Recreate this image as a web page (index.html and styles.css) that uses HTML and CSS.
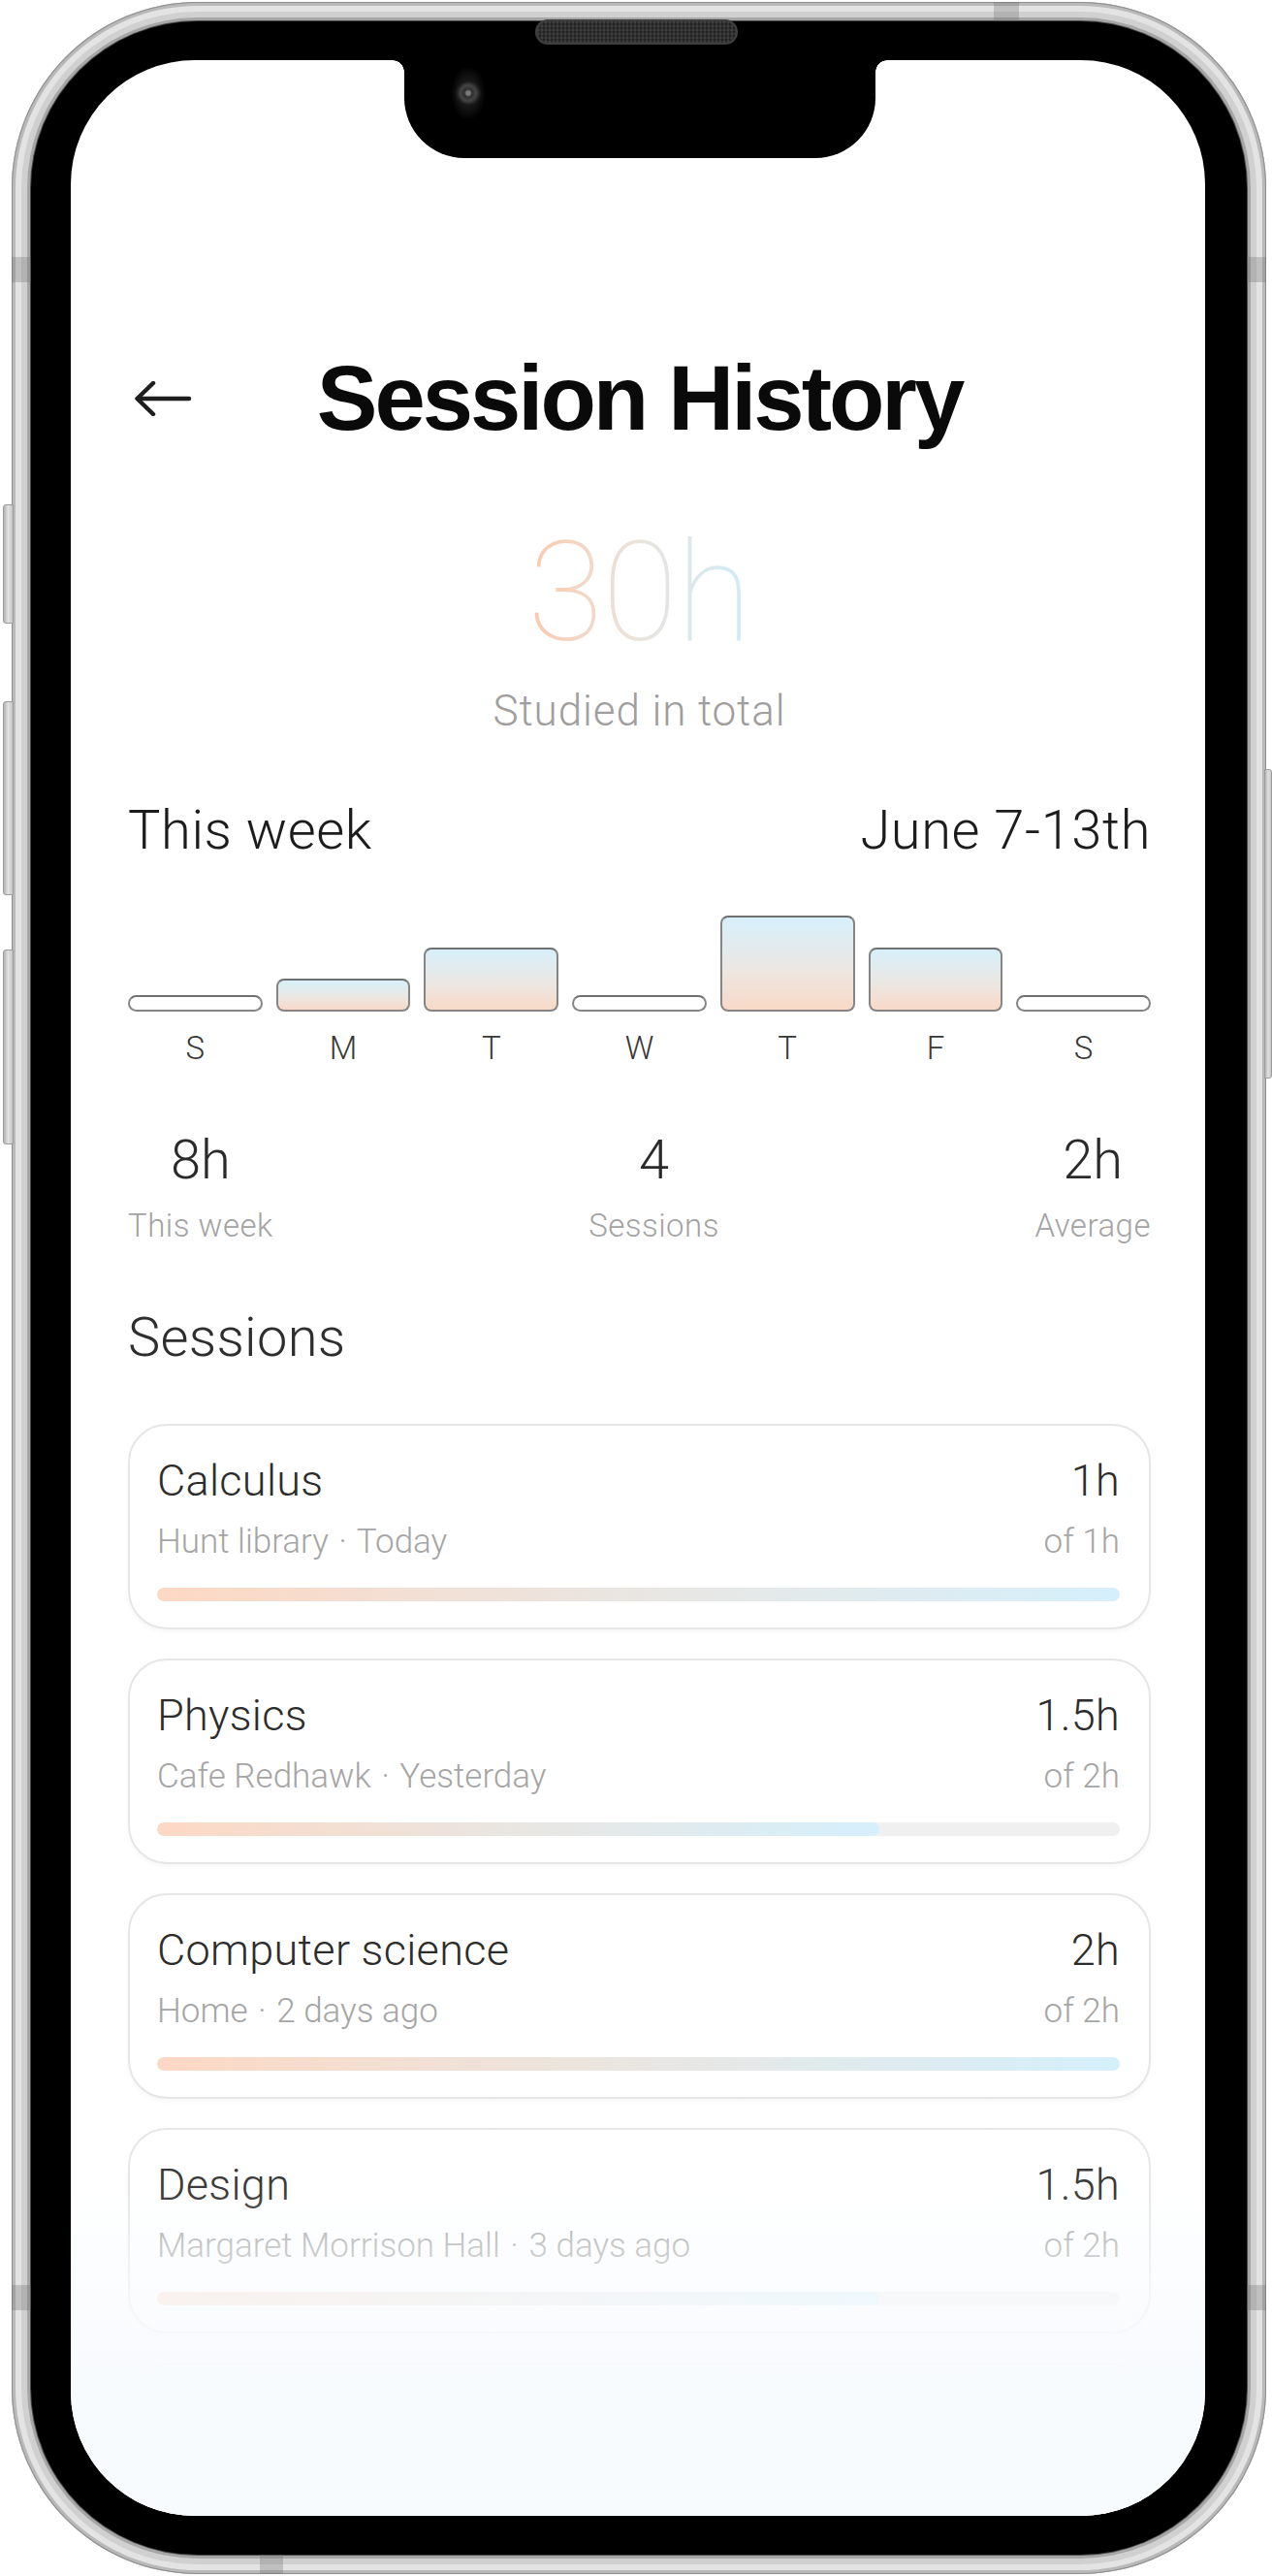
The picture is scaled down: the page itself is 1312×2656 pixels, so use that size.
FILE: index.html
```html
<!DOCTYPE html>
<html lang="en">
<head>
  <meta charset="UTF-8">
  <meta name="viewport" content="width=device-width, initial-scale=1.0">
  <title>Session History</title>
  <link rel="stylesheet" href="styles.css">
</head>
<body>
  <div class="phone">
    <span class="side-btn left-btn btn-mute"></span>
    <span class="side-btn left-btn btn-vol-up"></span>
    <span class="side-btn left-btn btn-vol-down"></span>
    <span class="side-btn right-btn"></span>
    <span class="band band-top"></span>
    <span class="band band-bottom"></span>
    <span class="band band-left-top"></span>
    <span class="band band-left-bottom"></span>
    <span class="band band-right-top"></span>
    <span class="band band-right-bottom"></span>
    <span class="speaker"></span>

    <div class="bezel">
      <div class="screen">
        <div class="notch"><span class="camera"></span></div>

        <main class="content">
          <header class="topbar">
            <button class="back" aria-label="Back">
              <svg width="60" height="36" viewBox="0 0 60 36" fill="none" stroke="#1e1e1e" stroke-width="4.5" stroke-linecap="round" stroke-linejoin="round">
                <path d="M57 18H4"/>
                <path d="M20 2L3.5 18L20 34"/>
              </svg>
            </button>
            <h1>Session History</h1>
            <span></span>
          </header>

          <section class="total">
            <div class="total-hours">30h</div>
            <p class="total-label">Studied in total</p>
          </section>

          <section class="week">
            <div class="week-head">
              <h2>This week</h2>
              <span class="range">June 7-13th</span>
            </div>
            <div class="chart">
              <div class="bar empty" style="height: 17px"></div>
              <div class="bar" style="height: 34px"></div>
              <div class="bar" style="height: 66px"></div>
              <div class="bar empty" style="height: 17px"></div>
              <div class="bar" style="height: 99px"></div>
              <div class="bar" style="height: 66px"></div>
              <div class="bar empty" style="height: 17px"></div>
            </div>
            <div class="days">
              <span>S</span><span>M</span><span>T</span><span>W</span><span>T</span><span>F</span><span>S</span>
            </div>
            <div class="stats">
              <div class="stat">
                <div class="stat-value">8h</div>
                <div class="stat-label">This week</div>
              </div>
              <div class="stat">
                <div class="stat-value">4</div>
                <div class="stat-label">Sessions</div>
              </div>
              <div class="stat">
                <div class="stat-value">2h</div>
                <div class="stat-label">Average</div>
              </div>
            </div>
          </section>

          <section class="sessions">
            <h2>Sessions</h2>
            <div class="card-list">
              <div class="card">
                <div class="card-row">
                  <span class="card-title">Calculus</span>
                  <span class="card-title">1h</span>
                </div>
                <div class="card-row card-meta">
                  <span>Hunt library <span class="dot">·</span> Today</span>
                  <span>of 1h</span>
                </div>
                <div class="progress"><div class="progress-fill" style="width: 100%"></div></div>
              </div>

              <div class="card">
                <div class="card-row">
                  <span class="card-title">Physics</span>
                  <span class="card-title">1.5h</span>
                </div>
                <div class="card-row card-meta">
                  <span>Cafe Redhawk <span class="dot">·</span> Yesterday</span>
                  <span>of 2h</span>
                </div>
                <div class="progress"><div class="progress-fill" style="width: 75%"></div></div>
              </div>

              <div class="card">
                <div class="card-row">
                  <span class="card-title">Computer science</span>
                  <span class="card-title">2h</span>
                </div>
                <div class="card-row card-meta">
                  <span>Home <span class="dot">·</span> 2 days ago</span>
                  <span>of 2h</span>
                </div>
                <div class="progress"><div class="progress-fill" style="width: 100%"></div></div>
              </div>

              <div class="card">
                <div class="card-row">
                  <span class="card-title">Design</span>
                  <span class="card-title">1.5h</span>
                </div>
                <div class="card-row card-meta">
                  <span>Margaret Morrison Hall <span class="dot">·</span> 3 days ago</span>
                  <span>of 2h</span>
                </div>
                <div class="progress"><div class="progress-fill" style="width: 75%"></div></div>
              </div>

              <div class="card">
                <div class="card-row">
                  <span class="card-title">Chemistry</span>
                  <span class="card-title">1h</span>
                </div>
                <div class="card-row card-meta">
                  <span>Sorrells library <span class="dot">·</span> 4 days ago</span>
                  <span>of 1h</span>
                </div>
                <div class="progress"><div class="progress-fill" style="width: 100%"></div></div>
              </div>
            </div>
          </section>
        </main>

        <div class="fade"></div>
      </div>
    </div>
  </div>
</body>
</html>
```

FILE: styles.css
```css
/* Basic reset */
* {
  margin: 0;
  padding: 0;
  box-sizing: border-box;
}

body {
  background: #fff;
  font-family: Roboto, "Liberation Sans", sans-serif;
  color: #2c2c2c;
}

/* Device frame */
.phone {
  position: relative;
  width: 1294px;
  height: 2652px;
  margin: 2px 0 0 12px;
  padding: 20px;
  border-radius: 192px;
  background: linear-gradient(90deg, #c2c2c2, #e4e4e4 2%, #d6d6d6 50%, #e4e4e4 98%, #c2c2c2);
  box-shadow:
    inset 0 0 0 1px #8f8f8f,
    inset 0 0 0 4px #b9b9b9,
    inset 0 0 0 10px #e3e3e3,
    inset 0 0 0 16px #d0d0d0,
    inset 0 0 0 20px #a6a6a6;
}

.side-btn {
  position: absolute;
  background: linear-gradient(90deg, #b3b3b3, #e2e2e2 50%, #c4c4c4);
  border: 1px solid #9b9b9b;
}

.left-btn {
  left: -9px;
  width: 11px;
  border-radius: 3px 0 0 3px;
}

.btn-mute { top: 518px; height: 123px; }
.btn-vol-up { top: 721px; height: 200px; }
.btn-vol-down { top: 977px; height: 201px; }

.right-btn {
  left: 1292px;
  top: 791px;
  width: 8px;
  height: 319px;
  border-radius: 0 3px 3px 0;
}

.band {
  position: absolute;
  background: rgba(110, 110, 110, 0.3);
}

.band-top { left: 1013px; top: 0; width: 26px; height: 20px; }
.band-bottom { left: 256px; top: 2632px; width: 24px; height: 20px; }
.band-left-top { left: 0; top: 263px; width: 20px; height: 26px; }
.band-left-bottom { left: 0; top: 2354px; width: 20px; height: 26px; }
.band-right-top { left: 1274px; top: 263px; width: 20px; height: 26px; }
.band-right-bottom { left: 1274px; top: 2354px; width: 20px; height: 26px; }

.speaker {
  position: absolute;
  z-index: 2;
  left: 540px;
  top: 18px;
  width: 209px;
  height: 26px;
  border-radius: 13px;
  border: 2px solid #3f3f3f;
  background:
    repeating-linear-gradient(90deg, rgba(255, 255, 255, 0.08) 0 2px, transparent 2px 4px),
    repeating-linear-gradient(0deg, rgba(255, 255, 255, 0.06) 0 2px, transparent 2px 4px),
    #222;
}

.bezel {
  width: 1254px;
  height: 2612px;
  padding: 40px 43px 40px 41px;
  border-radius: 172px;
  background: #000;
  box-shadow: 0 0 0 1px #4a4a4a;
}

.screen {
  position: relative;
  width: 1170px;
  height: 2532px;
  border-radius: 128px;
  overflow: hidden;
  background: #fff;
}

.notch {
  position: absolute;
  z-index: 3;
  top: 0;
  left: 344px;
  width: 486px;
  height: 101px;
  background: #000;
  border-radius: 0 0 62px 62px;
}

.notch::before,
.notch::after {
  content: "";
  position: absolute;
  top: 0;
  width: 12px;
  height: 12px;
}

.notch::before {
  left: -12px;
  background: radial-gradient(circle at 0 100%, transparent 11.5px, #000 12px);
}

.notch::after {
  right: -12px;
  background: radial-gradient(circle at 100% 100%, transparent 11.5px, #000 12px);
}

.camera {
  position: absolute;
  left: 48px;
  top: 6px;
  width: 36px;
  height: 56px;
  border-radius: 50%;
  background:
    radial-gradient(circle at 50% 50%, #7a7a7a 0 2px, #2e2e2e 4px, #444 8px, #1a1a1a 12px, transparent 14px),
    radial-gradient(ellipse at 50% 50%, #141414 40%, #000 72%);
}

/* Screen content */
.content {
  padding: 302px 56px 0 59px;
}

.topbar {
  display: grid;
  grid-template-columns: 1fr auto 1fr;
  align-items: center;
  height: 94px;
}

.back {
  display: flex;
  width: 60px;
  margin-left: 6px;
  background: none;
  border: none;
}

h1 {
  font-family: "Liberation Sans", Arial, sans-serif;
  font-weight: 700;
  font-size: 94px;
  line-height: 1;
  letter-spacing: -3px;
  color: #0a0a0a;
}

.total {
  text-align: center;
}

.total-hours {
  width: max-content;
  margin: 83px auto 0;
  font-weight: 100;
  font-size: 142px;
  line-height: 1;
  letter-spacing: -1px;
  background: linear-gradient(90deg, #fbc9ac 0%, #ebe3dc 48%, #cdebfb 100%);
  -webkit-background-clip: text;
  background-clip: text;
  color: transparent;
}

.total-label {
  margin-top: 28px;
  font-weight: 300;
  font-size: 44px;
  line-height: 1;
  letter-spacing: 0.9px;
  color: #9e9e9e;
}

.week {
  margin-top: 73px;
}

.week-head {
  display: flex;
  justify-content: space-between;
  align-items: baseline;
}

h2,
.range {
  font-weight: 300;
  font-size: 56px;
  line-height: 1;
  letter-spacing: 0.6px;
  color: #1c1c1c;
}

.chart {
  display: grid;
  grid-template-columns: repeat(7, 1fr);
  gap: 14px;
  align-items: end;
  height: 109px;
  margin-top: 50px;
}

.bar {
  border: 2px solid #858585;
  border-top-color: #707070;
  border-radius: 8px;
  background: linear-gradient(180deg, #d7f0fb, #ebe7e3 55%, #f9d9c7);
}

.bar.empty {
  background: #fff;
  border-radius: 9px;
}

.days {
  display: grid;
  grid-template-columns: repeat(7, 1fr);
  gap: 14px;
  margin-top: 21px;
  text-align: center;
  font-weight: 300;
  font-size: 33px;
  line-height: 1;
  color: #383838;
}

.stats {
  display: flex;
  justify-content: space-between;
  margin-top: 71px;
}

.stat {
  text-align: center;
}

.stat-value {
  font-weight: 300;
  font-size: 56px;
  line-height: 1;
  color: #2a2a2a;
}

.stat-label {
  margin-top: 23px;
  font-weight: 300;
  font-size: 33px;
  line-height: 1;
  letter-spacing: 0.5px;
  color: #a3a3a3;
}

.sessions {
  margin-top: 71px;
}

.sessions h2 {
  letter-spacing: 0.3px;
  color: #2e2e2e;
}

.card-list {
  display: flex;
  flex-direction: column;
  gap: 30px;
  margin-top: 61px;
}

.card {
  padding: 34px 30px 27px 28px;
  border: 2px solid #e6e6e6;
  border-radius: 40px;
  background: #fff;
  box-shadow: 0 3px 4px rgba(0, 0, 0, 0.03);
}

.card-row {
  display: flex;
  justify-content: space-between;
  align-items: baseline;
}

.card-title {
  font-weight: 300;
  font-size: 45px;
  line-height: 1;
  letter-spacing: 0.3px;
  color: #2c2c2c;
}

.card-meta {
  margin-top: 23px;
  font-weight: 300;
  font-size: 35px;
  line-height: 1;
  color: #a5a5a5;
}

.dot {
  margin: 0 2px;
}

.progress {
  height: 14px;
  margin-top: 30px;
  border-radius: 7px;
  background: #f0f0f0;
  overflow: hidden;
}

.progress-fill {
  height: 100%;
  border-radius: 7px;
  background: linear-gradient(90deg, #fdd8c4, #e9e6e2 50%, #d5f0fc);
}

/* Bottom fade over the list */
.fade {
  position: absolute;
  left: 0;
  right: 0;
  bottom: 0;
  height: 444px;
  background: linear-gradient(180deg,
    rgba(248, 251, 253, 0) 0%,
    rgba(248, 251, 253, 0.08) 25%,
    rgba(248, 251, 253, 0.3) 34%,
    rgba(248, 251, 253, 0.72) 48%,
    rgba(248, 251, 253, 0.94) 64%,
    rgba(248, 251, 253, 1) 74%,
    rgba(248, 251, 253, 1) 100%);
}
```
